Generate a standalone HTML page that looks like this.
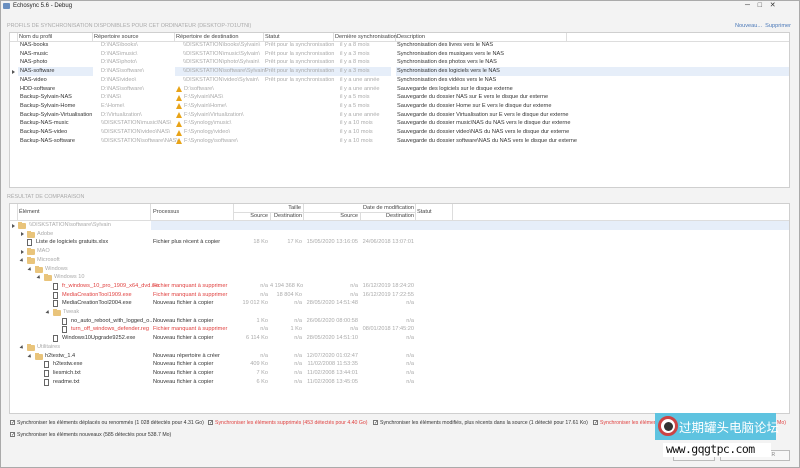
<!DOCTYPE html>
<html><head><meta charset="utf-8">
<style>
*{margin:0;padding:0;box-sizing:border-box}
body{width:800px;height:468px;overflow:hidden;background:#f3f3f3;font-family:"Liberation Sans",sans-serif;font-size:5.6px;color:#333;position:relative}
.a{position:absolute;white-space:nowrap}
.box{position:absolute;background:#fff;border:1px solid #cfcfcf}
.g{color:#aaa}.d{color:#333}.rd{color:#e0403f}
.row{position:absolute;height:9px;line-height:9px}
.hdr{position:absolute;background:#fff;border-bottom:1px solid #ddd;line-height:9px;color:#555}
.vl{position:absolute;width:1px;background:#ddd}
.fo{position:absolute;width:8px;height:6px;background:#e9c47b;border-radius:1px}
.fo:before{content:"";position:absolute;left:0;top:-1px;width:4px;height:2px;background:#e9c47b}
.fi{position:absolute;width:5px;height:7px;border:1px solid #666;background:#fff}
.ar{position:absolute;width:0;height:0;border-left:3px solid #555;border-top:2px solid transparent;border-bottom:2px solid transparent}
.ad{position:absolute;width:0;height:0;border-top:3px solid #555;border-left:2px solid transparent;border-right:2px solid transparent;transform:rotate(-45deg)}
.w{position:absolute;width:0;height:0;border-left:3.5px solid transparent;border-right:3.5px solid transparent;border-bottom:6px solid #e8a317}
.r{text-align:right}
.cb{position:absolute;width:5px;height:5px;border:1px solid #777;background:#fff;font-size:5px;line-height:4px;text-align:center}
</style></head><body>
<div style="position:absolute;left:0;top:0;width:800px;height:468px;border:1px solid #aaa"></div>
<div class="a" style="left:3px;top:3px;width:7px;height:6px;background:#6a8fc0;border-radius:1px"></div>
<div class="a" style="left:13px;top:3px;font-size:6px;color:#222">Echosync 5.6 - Debug</div>
<div class="a" style="left:745px;top:1px;font-size:7px;color:#333">─&nbsp;&nbsp;&nbsp;&nbsp;□&nbsp;&nbsp;&nbsp;&nbsp;✕</div>
<div class="a" style="left:7px;top:23px;color:#aaa;font-size:5.4px">PROFILS DE SYNCHRONISATION DISPONIBLES POUR CET ORDINATEUR (DESKTOP-7O1UTNI)</div>
<div class="a" style="left:735px;top:23px;color:#4a78b8">Nouveau...&nbsp; Supprimer</div>

<div class="box" style="left:9px;top:32px;width:781px;height:156px"></div>
<div class="hdr" style="left:10px;top:33px;width:779px;height:9px"></div>
<div class="vl" style="left:17px;top:33px;height:9px"></div>
<div class="vl" style="left:92px;top:33px;height:9px"></div>
<div class="vl" style="left:174px;top:33px;height:9px"></div>
<div class="vl" style="left:263px;top:33px;height:9px"></div>
<div class="vl" style="left:333px;top:33px;height:9px"></div>
<div class="vl" style="left:395px;top:33px;height:9px"></div>
<div class="vl" style="left:566px;top:33px;height:9px"></div>
<div class="a" style="left:19px;top:33px;line-height:9px;color:#444">Nom du profil</div>
<div class="a" style="left:94px;top:33px;line-height:9px;color:#444">Répertoire source</div>
<div class="a" style="left:176px;top:33px;line-height:9px;color:#444">Répertoire de destination</div>
<div class="a" style="left:265px;top:33px;line-height:9px;color:#444">Statut</div>
<div class="a" style="left:335px;top:33px;line-height:9px;color:#444">Dernière synchronisation</div>
<div class="a" style="left:397px;top:33px;line-height:9px;color:#444">Description</div>

<div class="a" style="left:18px;top:67px;width:75px;height:9px;background:#e6eef9"></div>
<div class="a" style="left:175px;top:67px;width:216px;height:9px;background:#e6eef9"></div>
<div class="a" style="left:396px;top:67px;width:393px;height:9px;background:#e6eef9"></div>
<div class="ar" style="left:12px;top:69.5px"></div>

<div style="position:absolute;left:0;top:41px;width:800px">
<div class="row" style="top:0"><span class="a d" style="left:20px">NAS-books</span><span class="a g" style="left:101px">D:\NAS\books\</span><span class="a g" style="left:183px">\\DISKSTATION\books\Sylvain\</span><span class="a g" style="left:265px">Prêt pour la synchronisation</span><span class="a g" style="left:340px">il y a 8 mois</span><span class="a d" style="left:397px">Synchronisation des livres vers le NAS</span></div>
<div class="row" style="top:8.7px"><span class="a d" style="left:20px">NAS-music</span><span class="a g" style="left:101px">D:\NAS\music\</span><span class="a g" style="left:183px">\\DISKSTATION\music\Sylvain\</span><span class="a g" style="left:265px">Prêt pour la synchronisation</span><span class="a g" style="left:340px">il y a 3 mois</span><span class="a d" style="left:397px">Synchronisation des musiques vers le NAS</span></div>
<div class="row" style="top:17.4px"><span class="a d" style="left:20px">NAS-photo</span><span class="a g" style="left:101px">D:\NAS\photo\</span><span class="a g" style="left:183px">\\DISKSTATION\photo\Sylvain\</span><span class="a g" style="left:265px">Prêt pour la synchronisation</span><span class="a g" style="left:340px">il y a 8 mois</span><span class="a d" style="left:397px">Synchronisation des photos vers le NAS</span></div>
<div class="row" style="top:26.1px"><span class="a d" style="left:20px">NAS-software</span><span class="a g" style="left:101px">D:\NAS\software\</span><span class="a g" style="left:183px">\\DISKSTATION\software\Sylvain\</span><span class="a g" style="left:265px">Prêt pour la synchronisation</span><span class="a g" style="left:340px">il y a 3 mois</span><span class="a d" style="left:397px">Synchronisation des logiciels vers le NAS</span></div>
<div class="row" style="top:34.8px"><span class="a d" style="left:20px">NAS-video</span><span class="a g" style="left:101px">D:\NAS\video\</span><span class="a g" style="left:183px">\\DISKSTATION\video\Sylvain\</span><span class="a g" style="left:265px">Prêt pour la synchronisation</span><span class="a g" style="left:340px">il y a une année</span><span class="a d" style="left:397px">Synchronisation des vidéos vers le NAS</span></div>
<div class="row" style="top:43.5px"><span class="a d" style="left:20px">HDD-software</span><span class="a g" style="left:101px">D:\NAS\software\</span><span class="w" style="left:176px;top:1.5px"></span><span class="a g" style="left:184px">D:\software\</span><span class="a g" style="left:340px">il y a une année</span><span class="a d" style="left:397px">Sauvegarde des logiciels sur le disque externe</span></div>
<div class="row" style="top:52.2px"><span class="a d" style="left:20px">Backup-Sylvain-NAS</span><span class="a g" style="left:101px">D:\NAS\</span><span class="w" style="left:176px;top:1.5px"></span><span class="a g" style="left:184px">F:\Sylvain\NAS\</span><span class="a g" style="left:340px">il y a 5 mois</span><span class="a d" style="left:397px">Sauvegarde du dossier NAS sur E vers le disque dur externe</span></div>
<div class="row" style="top:60.9px"><span class="a d" style="left:20px">Backup-Sylvain-Home</span><span class="a g" style="left:101px">E:\Home\</span><span class="w" style="left:176px;top:1.5px"></span><span class="a g" style="left:184px">F:\Sylvain\Home\</span><span class="a g" style="left:340px">il y a 5 mois</span><span class="a d" style="left:397px">Sauvegarde du dossier Home sur E vers le disque dur externe</span></div>
<div class="row" style="top:69.6px"><span class="a d" style="left:20px">Backup-Sylvain-Virtualisation</span><span class="a g" style="left:101px">D:\Virtualization\</span><span class="w" style="left:176px;top:1.5px"></span><span class="a g" style="left:184px">F:\Sylvain\Virtualization\</span><span class="a g" style="left:340px">il y a une année</span><span class="a d" style="left:397px">Sauvegarde du dossier Virtualisation sur E vers le disque dur externe</span></div>
<div class="row" style="top:78.3px"><span class="a d" style="left:20px">Backup-NAS-music</span><span class="a g" style="left:101px">\\DISKSTATION\music\NAS\</span><span class="w" style="left:176px;top:1.5px"></span><span class="a g" style="left:184px">F:\Synology\music\</span><span class="a g" style="left:340px">il y a 10 mois</span><span class="a d" style="left:397px">Sauvegarde du dossier music\NAS du NAS vers le disque dur externe</span></div>
<div class="row" style="top:87px"><span class="a d" style="left:20px">Backup-NAS-video</span><span class="a g" style="left:101px">\\DISKSTATION\video\NAS\</span><span class="w" style="left:176px;top:1.5px"></span><span class="a g" style="left:184px">F:\Synology\video\</span><span class="a g" style="left:340px">il y a 10 mois</span><span class="a d" style="left:397px">Sauvegarde du dossier video\NAS du NAS vers le disque dur externe</span></div>
<div class="row" style="top:95.7px"><span class="a d" style="left:20px">Backup-NAS-software</span><span class="a g" style="left:101px">\\DISKSTATION\software\NAS\</span><span class="w" style="left:176px;top:1.5px"></span><span class="a g" style="left:184px">F:\Synology\software\</span><span class="a g" style="left:340px">il y a 10 mois</span><span class="a d" style="left:397px">Sauvegarde du dossier software\NAS du NAS vers le disque dur externe</span></div>
</div>

<div class="a" style="left:7px;top:194px;color:#aaa;font-size:5.4px">RÉSULTAT DE COMPARAISON</div>
<div class="box" style="left:9px;top:203px;width:781px;height:211px"></div>
<div class="hdr" style="left:10px;top:204px;width:779px;height:17px"></div>
<div class="vl" style="left:17px;top:204px;height:17px"></div>
<div class="vl" style="left:150px;top:204px;height:17px"></div>
<div class="vl" style="left:233px;top:204px;height:17px"></div>
<div class="vl" style="left:270px;top:212px;height:9px"></div>
<div class="vl" style="left:303px;top:204px;height:17px"></div>
<div class="vl" style="left:360px;top:212px;height:9px"></div>
<div class="vl" style="left:415px;top:204px;height:17px"></div>
<div class="vl" style="left:452px;top:204px;height:17px"></div>
<div class="a" style="left:233px;top:212px;width:182px;height:1px;background:#ddd"></div>
<div class="a" style="left:19px;top:208px;line-height:9px;color:#444">Élément</div>
<div class="a" style="left:153px;top:208px;line-height:9px;color:#444">Processus</div>
<div class="a r" style="left:233px;width:68px;top:204px;line-height:8px;color:#444">Taille</div>
<div class="a r" style="left:303px;width:111px;top:204px;line-height:8px;color:#444">Date de modification</div>
<div class="a r" style="left:233px;width:35px;top:212px;line-height:9px;color:#444">Source</div>
<div class="a r" style="left:270px;width:32px;top:212px;line-height:9px;color:#444">Destination</div>
<div class="a r" style="left:303px;width:55px;top:212px;line-height:9px;color:#444">Source</div>
<div class="a r" style="left:360px;width:54px;top:212px;line-height:9px;color:#444">Destination</div>
<div class="a" style="left:417px;top:208px;line-height:9px;color:#444">Statut</div>

<div class="a" style="left:151px;top:221px;width:638px;height:9px;background:#e6eef9"></div>

<div style="position:absolute;left:0;top:221px;width:800px">
<div class="row" style="top:0"><span class="ar" style="left:12px;top:2.5px"></span><span class="fo" style="left:18px;top:2px"></span><span class="a g" style="left:29px">\\DISKSTATION\software\Sylvain</span></div>
<div class="row" style="top:8.7px"><span class="ar" style="left:21px;top:2.5px"></span><span class="fo" style="left:27px;top:2px"></span><span class="a g" style="left:37px">Adobe</span></div>
<div class="row" style="top:17.4px"><span class="fi" style="left:27px;top:1px"></span><span class="a d" style="left:36px">Liste de logiciels gratuits.xlsx</span><span class="a d" style="left:153px">Fichier plus récent à copier</span><span class="a g r" style="left:233px;width:35px">18 Ko</span><span class="a g r" style="left:270px;width:32px">17 Ko</span><span class="a g r" style="left:303px;width:55px">15/05/2020 13:16:05</span><span class="a g r" style="left:360px;width:54px">24/06/2018 13:07:01</span></div>
<div class="row" style="top:26.1px"><span class="ar" style="left:21px;top:2.5px"></span><span class="fo" style="left:27px;top:2px"></span><span class="a g" style="left:37px">MAO</span></div>
<div class="row" style="top:34.8px"><span class="ad" style="left:20px;top:3px"></span><span class="fo" style="left:27px;top:2px"></span><span class="a g" style="left:37px">Microsoft</span></div>
<div class="row" style="top:43.5px"><span class="ad" style="left:28px;top:3px"></span><span class="fo" style="left:35px;top:2px"></span><span class="a g" style="left:45px">Windows</span></div>
<div class="row" style="top:52.2px"><span class="ad" style="left:37px;top:3px"></span><span class="fo" style="left:44px;top:2px"></span><span class="a g" style="left:54px">Windows 10</span></div>
<div class="row" style="top:60.9px"><span class="fi" style="left:53px;top:1px"></span><span class="a rd" style="left:62px">fr_windows_10_pro_1909_x64_dvd.iso</span><span class="a rd" style="left:153px">Fichier manquant à supprimer</span><span class="a g r" style="left:233px;width:35px">n/a</span><span class="a g r" style="left:270px;width:32px">4 194 368 Ko</span><span class="a g r" style="left:303px;width:55px">n/a</span><span class="a g r" style="left:360px;width:54px">16/12/2019 18:24:20</span></div>
<div class="row" style="top:69.6px"><span class="fi" style="left:53px;top:1px"></span><span class="a rd" style="left:62px">MediaCreationTool1909.exe</span><span class="a rd" style="left:153px">Fichier manquant à supprimer</span><span class="a g r" style="left:233px;width:35px">n/a</span><span class="a g r" style="left:270px;width:32px">18 804 Ko</span><span class="a g r" style="left:303px;width:55px">n/a</span><span class="a g r" style="left:360px;width:54px">16/12/2019 17:22:55</span></div>
<div class="row" style="top:78.3px"><span class="fi" style="left:53px;top:1px"></span><span class="a d" style="left:62px">MediaCreationTool2004.exe</span><span class="a d" style="left:153px">Nouveau fichier à copier</span><span class="a g r" style="left:233px;width:35px">19 012 Ko</span><span class="a g r" style="left:270px;width:32px">n/a</span><span class="a g r" style="left:303px;width:55px">28/05/2020 14:51:48</span><span class="a g r" style="left:360px;width:54px">n/a</span></div>
<div class="row" style="top:87px"><span class="ad" style="left:46px;top:3px"></span><span class="fo" style="left:53px;top:2px"></span><span class="a g" style="left:63px">Tweak</span></div>
<div class="row" style="top:95.7px"><span class="fi" style="left:62px;top:1px"></span><span class="a d" style="left:71px">no_auto_reboot_with_logged_o...</span><span class="a d" style="left:153px">Nouveau fichier à copier</span><span class="a g r" style="left:233px;width:35px">1 Ko</span><span class="a g r" style="left:270px;width:32px">n/a</span><span class="a g r" style="left:303px;width:55px">26/06/2020 08:00:58</span><span class="a g r" style="left:360px;width:54px">n/a</span></div>
<div class="row" style="top:104.4px"><span class="fi" style="left:62px;top:1px"></span><span class="a rd" style="left:71px">turn_off_windows_defender.reg</span><span class="a rd" style="left:153px">Fichier manquant à supprimer</span><span class="a g r" style="left:233px;width:35px">n/a</span><span class="a g r" style="left:270px;width:32px">1 Ko</span><span class="a g r" style="left:303px;width:55px">n/a</span><span class="a g r" style="left:360px;width:54px">08/01/2018 17:45:20</span></div>
<div class="row" style="top:113.1px"><span class="fi" style="left:53px;top:1px"></span><span class="a d" style="left:62px">Windows10Upgrade9252.exe</span><span class="a d" style="left:153px">Nouveau fichier à copier</span><span class="a g r" style="left:233px;width:35px">6 114 Ko</span><span class="a g r" style="left:270px;width:32px">n/a</span><span class="a g r" style="left:303px;width:55px">28/05/2020 14:51:10</span><span class="a g r" style="left:360px;width:54px">n/a</span></div>
<div class="row" style="top:121.8px"><span class="ad" style="left:20px;top:3px"></span><span class="fo" style="left:27px;top:2px"></span><span class="a g" style="left:37px">Utilitaires</span></div>
<div class="row" style="top:130.5px"><span class="ad" style="left:28px;top:3px"></span><span class="fo" style="left:35px;top:2px"></span><span class="a d" style="left:45px">h2testw_1.4</span><span class="a d" style="left:153px">Nouveau répertoire à créer</span><span class="a g r" style="left:233px;width:35px">n/a</span><span class="a g r" style="left:270px;width:32px">n/a</span><span class="a g r" style="left:303px;width:55px">12/07/2020 01:02:47</span><span class="a g r" style="left:360px;width:54px">n/a</span></div>
<div class="row" style="top:139.2px"><span class="fi" style="left:44px;top:1px"></span><span class="a d" style="left:53px">h2testw.exe</span><span class="a d" style="left:153px">Nouveau fichier à copier</span><span class="a g r" style="left:233px;width:35px">409 Ko</span><span class="a g r" style="left:270px;width:32px">n/a</span><span class="a g r" style="left:303px;width:55px">11/02/2008 11:53:35</span><span class="a g r" style="left:360px;width:54px">n/a</span></div>
<div class="row" style="top:147.9px"><span class="fi" style="left:44px;top:1px"></span><span class="a d" style="left:53px">liesmich.txt</span><span class="a d" style="left:153px">Nouveau fichier à copier</span><span class="a g r" style="left:233px;width:35px">7 Ko</span><span class="a g r" style="left:270px;width:32px">n/a</span><span class="a g r" style="left:303px;width:55px">11/02/2008 13:44:01</span><span class="a g r" style="left:360px;width:54px">n/a</span></div>
<div class="row" style="top:156.6px"><span class="fi" style="left:44px;top:1px"></span><span class="a d" style="left:53px">readme.txt</span><span class="a d" style="left:153px">Nouveau fichier à copier</span><span class="a g r" style="left:233px;width:35px">6 Ko</span><span class="a g r" style="left:270px;width:32px">n/a</span><span class="a g r" style="left:303px;width:55px">11/02/2008 13:45:05</span><span class="a g r" style="left:360px;width:54px">n/a</span></div>
</div>

<div class="cb" style="left:10px;top:420px">✓</div><div class="a d" style="left:17px;top:419.5px;font-size:5.2px">Synchroniser les éléments déplacés ou renommés (1 028 détectés pour 4.31 Go)</div>
<div class="cb" style="left:208px;top:420px">✓</div><div class="a rd" style="left:215px;top:419.5px;font-size:5.2px">Synchroniser les éléments supprimés (453 détectés pour 4.40 Go)</div>
<div class="cb" style="left:373px;top:420px">✓</div><div class="a d" style="left:380px;top:419.5px;font-size:5.2px">Synchroniser les éléments modifiés, plus récents dans la source (1 détecté pour 17.61 Ko)</div>
<div class="cb" style="left:593px;top:420px">✓</div><div class="a rd" style="left:600px;top:419.5px;font-size:5.2px">Synchroniser les éléments</div>
<div class="a rd" style="left:777px;top:419.5px;font-size:5.2px">Mo)</div>
<div class="cb" style="left:10px;top:432px">✓</div><div class="a d" style="left:17px;top:431.5px;font-size:5.2px">Synchroniser les éléments nouveaux (585 détectés pour 538.7 Mo)</div>

<div class="a" style="left:673px;top:450px;width:42px;height:11px;border:1px solid #bbb;background:#f7f7f7;color:#888;text-align:center;line-height:9px;font-size:5px">COMPARER</div>
<div class="a" style="left:720px;top:450px;width:70px;height:11px;border:1px solid #bbb;background:#f7f7f7;color:#888;text-align:center;line-height:9px;font-size:5px">SYNCHRONISER</div>

<div class="a" style="left:655px;top:413px;width:121px;height:27px;background:#5ec3e0"></div>
<div class="a" style="left:658px;top:416px;width:20px;height:20px;border-radius:50%;background:#fff;border:3px solid #c44"></div>
<div class="a" style="left:664px;top:422px;width:9px;height:9px;border-radius:50%;background:#333"></div>
<div class="a" style="left:679px;top:419px;color:#fff;font-size:12.5px;line-height:16px;font-family:'Noto Sans CJK SC',sans-serif">过期罐头电脑论坛</div>
<div class="a" style="left:663px;top:443px;height:14px;width:108px;background:#fff"></div>
<div class="a" style="left:666px;top:442px;color:#111;font-size:11.5px;font-family:'DejaVu Sans Mono',monospace;letter-spacing:-0.6px">www.gqgtpc.com</div>
</body></html>
